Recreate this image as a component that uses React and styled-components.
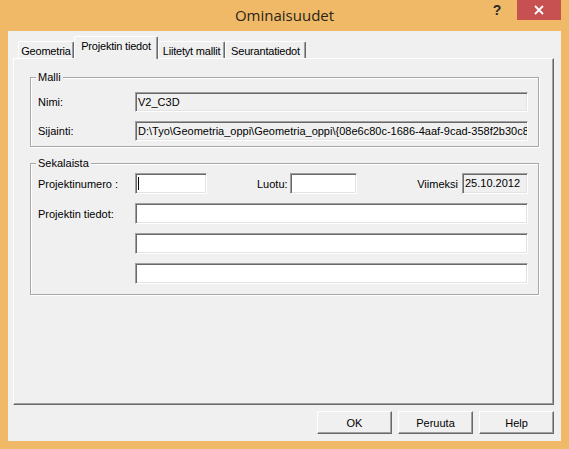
import React from "react";
import styled, { createGlobalStyle } from "styled-components";

const GlobalStyle = createGlobalStyle`
    html, body {
        margin: 0;
        padding: 0;
        background: #efb967;
    }
    body {
        font-family: "Liberation Sans", Arial, sans-serif;
        font-size: 11px;
        color: #000;
    }
`;

const Window = styled.div`
    width: 569px;
    height: 449px;
    box-sizing: border-box;
    display: flex;
    flex-direction: column;
    background: #efb967;
    padding: 0 8px 8px 8px;
`;

const TitleBar = styled.div`
    position: relative;
    height: 31px;
    margin: 0 -8px;
    display: flex;
    align-items: center;
    justify-content: center;
`;

const Title = styled.div`
    font-family: "Open Sans", "Noto Sans", sans-serif;
    font-size: 15px;
    color: #2b2418;
    margin-top: -1px;
`;

const Controls = styled.div`
    position: absolute;
    top: 0;
    right: 8px;
    display: flex;
    gap: 2px;
`;

const HelpButton = styled.div`
    width: 36px;
    height: 20px;
    display: flex;
    align-items: center;
    justify-content: center;
    font-family: "Liberation Sans", Arial, sans-serif;
    font-weight: bold;
    font-size: 14px;
    color: #2a2a2a;
`;

const CloseButton = styled.div`
    width: 44px;
    height: 20px;
    background: #c75050;
    display: flex;
    align-items: center;
    justify-content: center;
`;

const Client = styled.div`
    flex: 1;
    display: flex;
    flex-direction: column;
    background: #f0f0f0;
    padding: 5px 7px 7px 5px;
    box-sizing: border-box;
`;

const TabStrip = styled.div`
    height: 22px;
    display: flex;
    align-items: flex-end;
    padding-left: 5px;
    position: relative;
    z-index: 1;
`;

const Tab = styled.div`
    box-sizing: border-box;
    width: ${p => p.$w}px;
    height: ${p => (p.$active ? 23 : 17)}px;
    margin-bottom: ${p => (p.$active ? -1 : 0)}px;
    background: #f0f0f0;
    border-top: 1px solid #fff;
    border-left: 1px solid #fff;
    border-right: 1px solid #696969;
    box-shadow: inset -1px 0 0 #a0a0a0;
    border-radius: 2px 2px 0 0;
    display: flex;
    justify-content: center;
    align-items: ${p => (p.$active ? "flex-start" : "center")};
    padding-top: ${p => (p.$active ? 3 : 2)}px;
    letter-spacing: -0.2px;
    white-space: nowrap;
`;

const Panel = styled.div`
    height: 347px;
    box-sizing: border-box;
    border-top: 1px solid #fff;
    border-left: 1px solid #fff;
    border-right: 1px solid #696969;
    border-bottom: 1px solid #696969;
    box-shadow: inset -1px -1px 0 #a0a0a0;
    padding: 18px 14px 0 16px;
    display: flex;
    flex-direction: column;
    gap: 16px;
`;

const Group = styled.div`
    position: relative;
    border: 1px solid #a8a8a8;
    box-shadow: inset 1px 1px 0 #fff, 1px 1px 0 #fff;
    padding: ${p => p.$pad};
`;

const Caption = styled.span`
    position: absolute;
    top: -7px;
    left: 5px;
    padding: 0 2px;
    line-height: 13px;
    background: #f0f0f0;
`;

const FormGrid = styled.div`
    display: grid;
    grid-template-columns: 97px 1fr;
    row-gap: 9px;
    align-items: center;
`;

const Label = styled.div`
    white-space: nowrap;
`;

const Field = styled.div`
    box-sizing: border-box;
    height: ${p => p.$h || 21}px;
    width: ${p => (p.$w ? `${p.$w}px` : "auto")};
    flex: none;
    border-top: 1px solid #a0a0a0;
    border-left: 1px solid #a0a0a0;
    border-bottom: 1px solid #fff;
    border-right: 1px solid #fff;
    box-shadow: inset 1px 1px 0 #696969, inset -1px -1px 0 #e3e3e3;
    background: ${p => (p.$readOnly ? "#f0f0f0" : "#fff")};
    padding: 0 2px;
    line-height: ${p => (p.$h || 21) - 2}px;
    overflow: hidden;
    white-space: nowrap;
    display: flex;
    align-items: center;
`;

const Caret = styled.span`
    display: block;
    width: 1px;
    height: 13px;
    background: #000;
`;

const InlineRow = styled.div`
    display: flex;
    align-items: center;
`;

const InlineLabel = styled.span`
    margin-left: ${p => p.$ml};
    margin-right: ${p => p.$mr}px;
    white-space: nowrap;
`;

const ButtonRow = styled.div`
    margin-top: 6px;
    display: flex;
    justify-content: flex-end;
    gap: 6px;
`;

const Button = styled.div`
    box-sizing: border-box;
    width: 75px;
    height: 23px;
    display: flex;
    align-items: center;
    justify-content: center;
    background: #f0f0f0;
    border-top: 1px solid #fff;
    border-left: 1px solid #fff;
    border-right: 1px solid #696969;
    border-bottom: 1px solid #696969;
    box-shadow: inset -1px -1px 0 #a0a0a0;
`;

const tabs = [
    { label: "Geometria", w: 56 },
    { label: "Projektin tiedot", w: 84, active: true },
    { label: "Liitetyt mallit", w: 67 },
    { label: "Seurantatiedot", w: 81 }
];

const App = () => {
    return (
        <>
            <GlobalStyle />
            <Window>
                <TitleBar>
                    <Title>Ominaisuudet</Title>
                    <Controls>
                        <HelpButton>?</HelpButton>
                        <CloseButton>
                            <svg width="10" height="10" viewBox="0 0 10 10">
                                <path d="M1 1 L9 9 M9 1 L1 9" stroke="#fff" strokeWidth="1.8" />
                            </svg>
                        </CloseButton>
                    </Controls>
                </TitleBar>
                <Client>
                    <TabStrip>
                        {tabs.map(t => (
                            <Tab key={t.label} $w={t.w} $active={t.active}>
                                {t.label}
                            </Tab>
                        ))}
                    </TabStrip>
                    <Panel>
                        <Group $pad="14px 10px 5px 7px">
                            <Caption>Malli</Caption>
                            <FormGrid>
                                <Label>Nimi:</Label>
                                <Field $readOnly $h={20}>V2_C3D</Field>
                                <Label>Sijainti:</Label>
                                <Field $readOnly $h={20}>
                                    D:\Tyo\Geometria_oppi\Geometria_oppi\{"{"}08e6c80c-1686-4aaf-9cad-358f2b30c80c{"}"}
                                </Field>
                            </FormGrid>
                        </Group>
                        <Group $pad="9px 10px 10px 7px">
                            <Caption>Sekalaista</Caption>
                            <FormGrid>
                                <Label>Projektinumero :</Label>
                                <InlineRow>
                                    <Field $w={72}><Caret /></Field>
                                    <InlineLabel $ml="50px" $mr={2}>Luotu:</InlineLabel>
                                    <Field $w={67} />
                                    <InlineLabel $ml="auto" $mr={4}>Viimeksi</InlineLabel>
                                    <Field $w={66} $readOnly>25.10.2012</Field>
                                </InlineRow>
                                <Label>Projektin tiedot:</Label>
                                <Field />
                                <span />
                                <Field />
                                <span />
                                <Field />
                            </FormGrid>
                        </Group>
                    </Panel>
                    <ButtonRow>
                        <Button>OK</Button>
                        <Button>Peruuta</Button>
                        <Button>Help</Button>
                    </ButtonRow>
                </Client>
            </Window>
        </>
    );
};

export default App;
